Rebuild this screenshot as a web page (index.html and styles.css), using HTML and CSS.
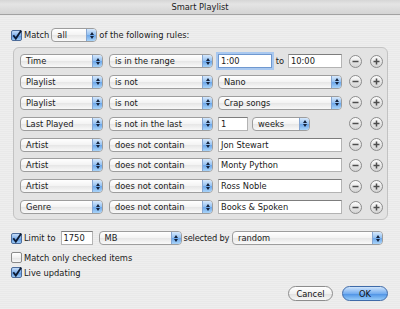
FILE: index.html
```html
<!DOCTYPE html>
<html lang="en">
<head>
  <meta charset="UTF-8" />
  <title>Smart Playlist</title>
  <link rel="stylesheet" href="styles.css">
</head>
<body>
  <div class="window">
    <div class="titlebar">Smart Playlist</div>

    <div class="content">
      <!-- match header -->
      <div class="match-row">
        <span class="check on"><svg viewBox="0 0 11 11" width="11" height="11"><path d="M2.3 5.3 L4.8 8.6 L10.2 0.4" /></svg></span>
        <span class="lbl">Match</span>
        <div class="popup w-all"><span class="val">all</span><span class="arrows"></span></div>
        <span class="lbl">of the following rules:</span>
      </div>

      <!-- rules -->
      <div class="rules">
        <div class="rule">
          <div class="popup w-field"><span class="val">Time</span><span class="arrows"></span></div>
          <div class="popup w-op"><span class="val">is in the range</span><span class="arrows"></span></div>
          <div class="value range">
            <div class="field focus w-time">1:00</div>
            <span>to</span>
            <div class="field w-time">10:00</div>
          </div>
          <div class="addrem">
            <span class="circ"><svg viewBox="0 0 11 11" width="11" height="11"><path d="M2.5 5.5 H8.5" /></svg></span>
            <span class="circ"><svg viewBox="0 0 11 11" width="11" height="11"><path d="M2.5 5.5 H8.5 M5.5 2.5 V8.5" /></svg></span>
          </div>
        </div>

        <div class="rule">
          <div class="popup w-field"><span class="val">Playlist</span><span class="arrows"></span></div>
          <div class="popup w-op"><span class="val">is not</span><span class="arrows"></span></div>
          <div class="value">
            <div class="popup w-full"><span class="val">Nano</span><span class="arrows"></span></div>
          </div>
          <div class="addrem">
            <span class="circ"><svg viewBox="0 0 11 11" width="11" height="11"><path d="M2.5 5.5 H8.5" /></svg></span>
            <span class="circ"><svg viewBox="0 0 11 11" width="11" height="11"><path d="M2.5 5.5 H8.5 M5.5 2.5 V8.5" /></svg></span>
          </div>
        </div>

        <div class="rule">
          <div class="popup w-field"><span class="val">Playlist</span><span class="arrows"></span></div>
          <div class="popup w-op"><span class="val">is not</span><span class="arrows"></span></div>
          <div class="value">
            <div class="popup w-full"><span class="val">Crap songs</span><span class="arrows"></span></div>
          </div>
          <div class="addrem">
            <span class="circ"><svg viewBox="0 0 11 11" width="11" height="11"><path d="M2.5 5.5 H8.5" /></svg></span>
            <span class="circ"><svg viewBox="0 0 11 11" width="11" height="11"><path d="M2.5 5.5 H8.5 M5.5 2.5 V8.5" /></svg></span>
          </div>
        </div>

        <div class="rule">
          <div class="popup w-field"><span class="val">Last Played</span><span class="arrows"></span></div>
          <div class="popup w-op"><span class="val">is not in the last</span><span class="arrows"></span></div>
          <div class="value">
            <div class="field w-num">1</div>
            <div class="popup w-unit"><span class="val">weeks</span><span class="arrows"></span></div>
          </div>
          <div class="addrem">
            <span class="circ"><svg viewBox="0 0 11 11" width="11" height="11"><path d="M2.5 5.5 H8.5" /></svg></span>
            <span class="circ"><svg viewBox="0 0 11 11" width="11" height="11"><path d="M2.5 5.5 H8.5 M5.5 2.5 V8.5" /></svg></span>
          </div>
        </div>

        <div class="rule">
          <div class="popup w-field"><span class="val">Artist</span><span class="arrows"></span></div>
          <div class="popup w-op"><span class="val">does not contain</span><span class="arrows"></span></div>
          <div class="value"><div class="field w-full">Jon Stewart</div></div>
          <div class="addrem">
            <span class="circ"><svg viewBox="0 0 11 11" width="11" height="11"><path d="M2.5 5.5 H8.5" /></svg></span>
            <span class="circ"><svg viewBox="0 0 11 11" width="11" height="11"><path d="M2.5 5.5 H8.5 M5.5 2.5 V8.5" /></svg></span>
          </div>
        </div>

        <div class="rule">
          <div class="popup w-field"><span class="val">Artist</span><span class="arrows"></span></div>
          <div class="popup w-op"><span class="val">does not contain</span><span class="arrows"></span></div>
          <div class="value"><div class="field w-full">Monty Python</div></div>
          <div class="addrem">
            <span class="circ"><svg viewBox="0 0 11 11" width="11" height="11"><path d="M2.5 5.5 H8.5" /></svg></span>
            <span class="circ"><svg viewBox="0 0 11 11" width="11" height="11"><path d="M2.5 5.5 H8.5 M5.5 2.5 V8.5" /></svg></span>
          </div>
        </div>

        <div class="rule">
          <div class="popup w-field"><span class="val">Artist</span><span class="arrows"></span></div>
          <div class="popup w-op"><span class="val">does not contain</span><span class="arrows"></span></div>
          <div class="value"><div class="field w-full">Ross Noble</div></div>
          <div class="addrem">
            <span class="circ"><svg viewBox="0 0 11 11" width="11" height="11"><path d="M2.5 5.5 H8.5" /></svg></span>
            <span class="circ"><svg viewBox="0 0 11 11" width="11" height="11"><path d="M2.5 5.5 H8.5 M5.5 2.5 V8.5" /></svg></span>
          </div>
        </div>

        <div class="rule">
          <div class="popup w-field"><span class="val">Genre</span><span class="arrows"></span></div>
          <div class="popup w-op"><span class="val">does not contain</span><span class="arrows"></span></div>
          <div class="value"><div class="field w-full">Books &amp; Spoken</div></div>
          <div class="addrem">
            <span class="circ"><svg viewBox="0 0 11 11" width="11" height="11"><path d="M2.5 5.5 H8.5" /></svg></span>
            <span class="circ"><svg viewBox="0 0 11 11" width="11" height="11"><path d="M2.5 5.5 H8.5 M5.5 2.5 V8.5" /></svg></span>
          </div>
        </div>
      </div>

      <!-- limit -->
      <div class="limit-row">
        <span class="check on"><svg viewBox="0 0 11 11" width="11" height="11"><path d="M2.3 5.3 L4.8 8.6 L10.2 0.4" /></svg></span>
        <span class="lbl">Limit to</span>
        <div class="field w-limit">1750</div>
        <div class="popup w-mb"><span class="val">MB</span><span class="arrows"></span></div>
        <span class="lbl sel">selected by</span>
        <div class="popup w-random"><span class="val">random</span><span class="arrows"></span></div>
      </div>

      <div class="opt first">
        <span class="check"></span>
        <span class="lbl">Match only checked items</span>
      </div>
      <div class="opt">
        <span class="check on"><svg viewBox="0 0 11 11" width="11" height="11"><path d="M2.3 5.3 L4.8 8.6 L10.2 0.4" /></svg></span>
        <span class="lbl">Live updating</span>
      </div>

      <div class="actions">
        <button class="btn">Cancel</button>
        <button class="btn default">OK</button>
      </div>
    </div>
  </div>
</body>
</html>
```

FILE: styles.css
```css
* {
  box-sizing: border-box;
}

body {
  margin: 0;
  font-family: 'DejaVu Sans', sans-serif;
  font-size: 8.3px;
  color: #1a1a1a;
}

.window {
  width: 400px;
  height: 309px;
  overflow: hidden;
  background: repeating-linear-gradient(#eeeeee 0 1px, #e9e9e9 1px 2px);
}

.titlebar {
  height: 15px;
  line-height: 14px;
  text-align: center;
  color: #1c1c1c;
  background: linear-gradient(#d6d6d6, #e4e4e4 30%, #d4d4d4);
  border-bottom: 1px solid #a2a2a2;
}

.content {
  padding: 13px 12px 0 11px;
}

.lbl {
  margin-left: 2px;
  white-space: nowrap;
}

/* checkbox */
.check {
  display: inline-flex;
  flex: none;
  width: 11px;
  height: 11px;
  border: 1px solid #8a8a8a;
  border-radius: 2px;
  background: linear-gradient(#ffffff, #f0f0f0 50%, #e2e2e2 51%, #f8f8f8);
}

.check.on {
  border-color: #4d6c9a;
  background: linear-gradient(#c4dcf8, #7fb0ec 50%, #5592e0 51%, #9ccaf6);
}

.check svg {
  overflow: visible;
  margin: -1px 0 0 -1px;
}

.check path {
  fill: none;
  stroke: #0d1b33;
  stroke-width: 1.8;
}

/* popup button */
.popup {
  display: flex;
  align-items: center;
  flex: none;
  height: 14px;
  border: 1px solid #9d9d9d;
  border-radius: 4px;
  overflow: hidden;
  background: linear-gradient(#ffffff, #f3f3f3 50%, #e6e6e6 51%, #f9f9f9);
}

.popup .val {
  flex: 1;
  padding-left: 5px;
  white-space: nowrap;
  overflow: hidden;
}

.popup .arrows {
  display: flex;
  flex-direction: column;
  align-items: center;
  justify-content: center;
  gap: 1px;
  width: 10px;
  align-self: stretch;
  border-left: 1px solid #86a6d2;
  background: linear-gradient(#d6e8fc, #92c0f1 50%, #6ba6ea 51%, #a9d4f9);
}

.popup .arrows::before,
.popup .arrows::after {
  content: "";
  border-left: 2px solid transparent;
  border-right: 2px solid transparent;
}

.popup .arrows::before {
  border-bottom: 3px solid #14233d;
}

.popup .arrows::after {
  border-top: 3px solid #14233d;
}

/* text field */
.field {
  display: flex;
  align-items: center;
  flex: none;
  height: 14px;
  padding-left: 2px;
  background: #fff;
  border: 1px solid #b3b3b3;
  border-top-color: #7d7d7d;
  white-space: nowrap;
}

.field.focus {
  border-color: #6f98cf;
  box-shadow: 0 0 0 2px #a9c8ef;
}

/* header row */
.match-row {
  display: flex;
  align-items: center;
  height: 14px;
}

.w-all {
  width: 46px;
  margin: 0 0 0 2px;
}

/* rules box */
.rules {
  display: flex;
  flex-direction: column;
  gap: 6.9px;
  width: 375px;
  margin: 5px 0 0 2px;
  padding: 6px 4px 5px 6px;
  background: #e3e3e3;
  border: 1px solid #c3c3c3;
  border-radius: 6px;
}

.rule {
  display: flex;
  align-items: center;
  height: 14px;
}

.w-field {
  width: 83px;
}

.w-op {
  width: 104px;
  margin-left: 6px;
}

.value {
  display: flex;
  align-items: center;
  gap: 4px;
  width: 124px;
  margin-left: 5px;
}

.value.range {
  justify-content: space-between;
  gap: 0;
}

.w-time {
  width: 54px;
}

.w-full {
  width: 124px;
}

.w-num {
  width: 30px;
}

.w-unit {
  width: 58px;
}

.addrem {
  display: flex;
  gap: 8px;
  margin-left: auto;
}

.circ {
  display: flex;
  align-items: center;
  justify-content: center;
  width: 13px;
  height: 13px;
  border: 1px solid #8c8c8c;
  border-radius: 50%;
  background: linear-gradient(#fdfdfd, #e4e4e4 55%, #d4d4d4);
}

.circ path {
  stroke: #4d4d4d;
  stroke-width: 1.5;
}

/* limit + options */
.limit-row {
  display: flex;
  align-items: center;
  height: 14px;
  margin-top: 11px;
}

.w-limit {
  width: 32px;
  margin-left: 5px;
}

.w-mb {
  width: 83px;
  margin-left: 6px;
}

.lbl.sel {
  margin-left: 2px;
  letter-spacing: -0.2px;
}

.w-random {
  width: 151px;
  margin: 0 5px 0 auto;
}

.opt {
  display: flex;
  align-items: center;
  height: 15px;
}

.opt.first {
  margin-top: 5px;
}

/* buttons */
.actions {
  display: flex;
  justify-content: flex-end;
  gap: 9px;
  margin-top: 6px;
}

.btn {
  height: 15px;
  width: 45px;
  padding: 0;
  font: inherit;
  color: #111;
  border: 1px solid #8d8d8d;
  border-radius: 8px;
  background: linear-gradient(#ffffff, #f1f1f1 50%, #e0e0e0 51%, #f7f7f7);
}

.btn.default {
  width: 46px;
  border-color: #3f6aa8;
  background: linear-gradient(#cfe4fb, #76aef0 50%, #4a8fe4 51%, #95cbf8);
}
```
